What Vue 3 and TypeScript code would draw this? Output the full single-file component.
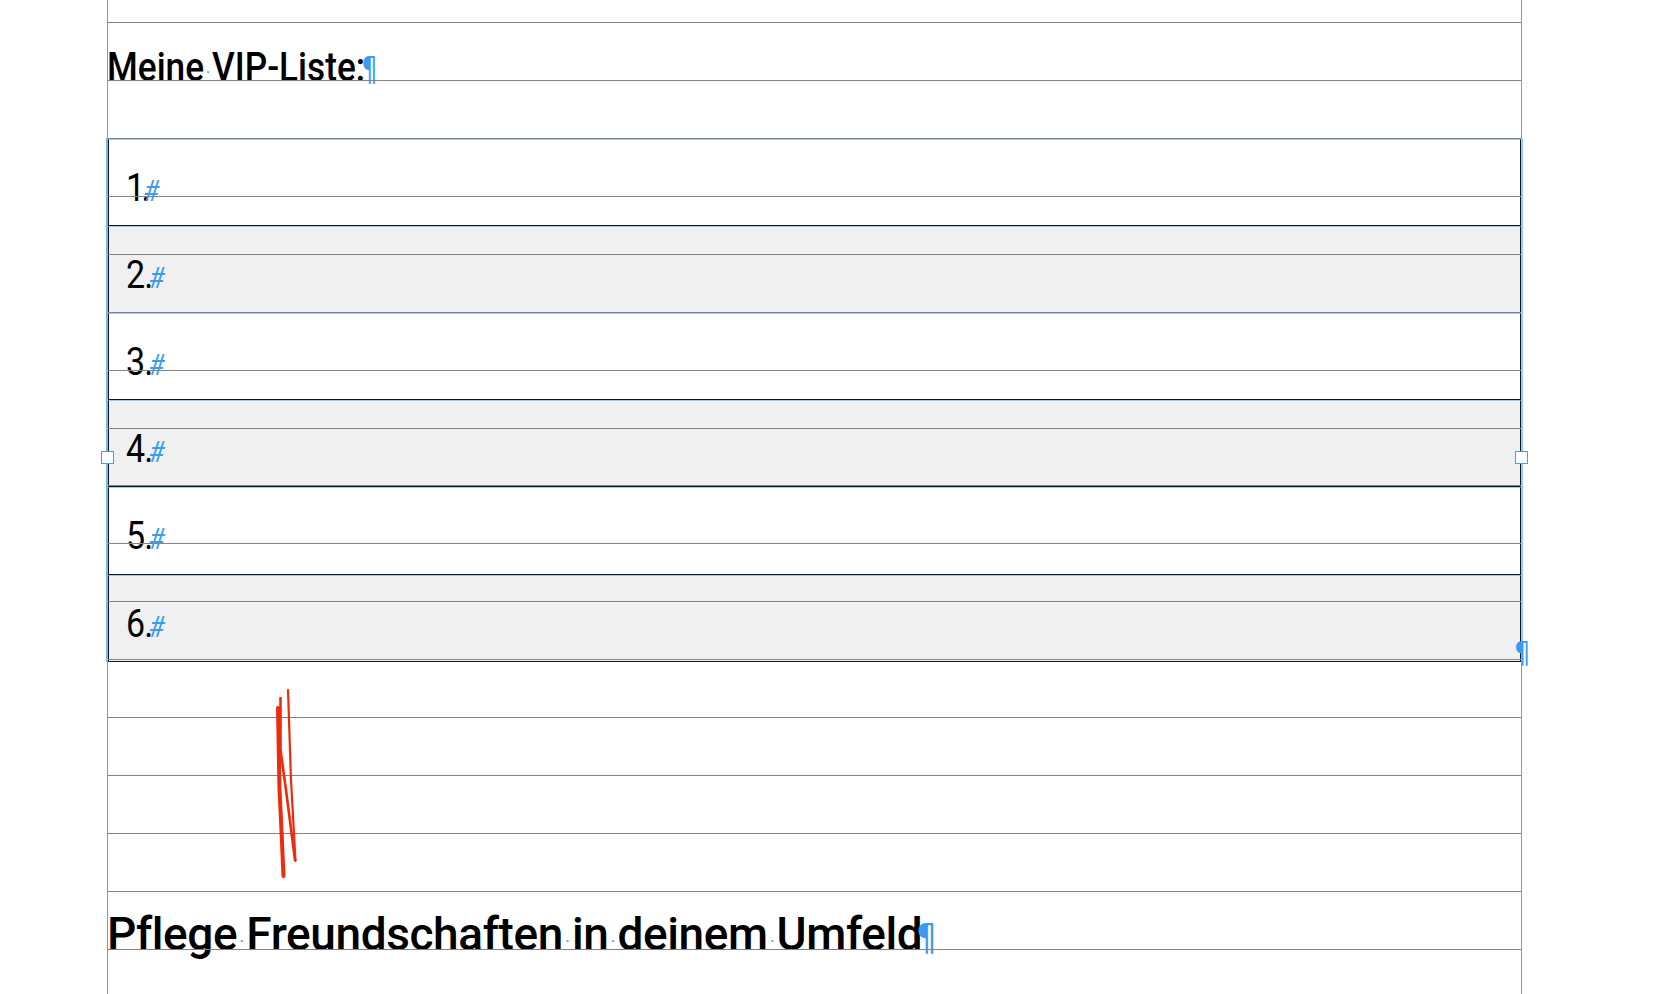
<template>
  <div class="page">
    <div class="sheet">
      <h2 class="vip"><span class="squeeze">Meine<i class="sp">·</i>VIP-Liste:<span class="pil">¶</span></span></h2>

      <div class="tbl">
        <div v-for="n in 6" :key="n" class="row" :class="{ alt: n % 2 === 0 }">
          <span class="squeeze"><span class="num" :class="{ one: n === 1 }">{{ n }}.</span><span class="hash">#</span></span>
        </div>
        <span class="handle left"></span>
        <span class="handle right"></span>
        <span class="pil end">¶</span>
      </div>

      <div class="gap"></div>

      <h1 class="title">Pflege<i class="sp">·</i>Freundschaften<i class="sp">·</i>in<i class="sp">·</i>deinem<i class="sp">·</i>Umfeld<span class="pil">¶</span></h1>

      <!-- baseline grid sits on top of the frames -->
      <svg class="grid" width="1415" height="994" viewBox="0 0 1415 994">
        <rect v-for="y in gridLines" :key="y" x="1" :y="y" width="1413" height="1" fill="#838383" />
      </svg>

      <svg class="scribble" width="60" height="220" viewBox="0 0 60 220" fill="none" stroke="#f02a0c" stroke-linecap="round">
        <path d="M28 38 L29.5 120 L31 150 L33.5 206" stroke-width="4" />
        <path d="M30.5 28 L30.5 80 L36 120 L45 190" stroke-width="2.6" />
        <path d="M38 20 L41 110 L45.5 191" stroke-width="2.2" />
      </svg>
    </div>
  </div>
</template>

<script setup lang="ts">
// lines of the baseline grid, 57.9px apart
const gridLines: number[] = []
for (let i = 0; i < 17; i++) gridLines.push(Math.round(22.2 + i * 57.9))
</script>

<style>
html, body { margin: 0; background: #fff; overflow: hidden; }
</style>

<style scoped>
.page {
  height: 994px;
  padding-left: 107px;
  overflow: hidden;
  font-family: Roboto, "Liberation Sans", sans-serif;
  color: #000;
}
.sheet {
  position: relative;
  width: 1415px;
  height: 994px;
  box-sizing: border-box;
  border-left: 1px solid #62a7d2;
  border-right: 1px solid #62a7d2;
}
.squeeze {
  display: inline-block;
  transform: scaleX(0.87);
  transform-origin: left center;
}
.vip {
  margin: 0 0 0 -1px;
  height: 138px;
  box-sizing: border-box;
  padding-top: 44px;
  font-size: 40px;
  line-height: 48px;
  font-weight: 500;
  white-space: nowrap;
}
.vip .squeeze { transform: scaleX(0.88); }
.sp {
  display: inline-block;
  width: 9px;
  text-align: center;
  font-style: normal;
  font-size: 13px;
  font-weight: 700;
  line-height: 1;
  vertical-align: 5px;
  color: #3a9bf0;
  letter-spacing: 0;
}
.pil {
  display: inline-block;
  font-family: "DejaVu Sans", sans-serif;
  font-weight: 400;
  color: #3a9bf0;
  letter-spacing: 0;
  transform: scaleX(0.85);
  transform-origin: left center;
}
.vip .pil { margin-left: -4px; font-size: 34px; }
.title .pil { margin-left: -6px; font-size: 38px; }
.tbl {
  position: relative;
  border-top: 1px solid #8a9cb5;
  box-shadow: -2px 0 0 #7ab8ea, 2px 0 0 #9ccbf0;
}
.row {
  height: 87px;
  box-sizing: border-box;
  padding: 24px 0 0 17px;
  border: 1px solid #0c1426;
  border-top-color: #a9c6e6;
  background: #fff;
  font-size: 39px;
  line-height: 48px;
  white-space: nowrap;
}
.row:nth-child(5) { height: 88px; }
.row.alt { background: #f0f0f0; }
.row:nth-child(2) { border-bottom-color: #9fb0c6; }
.num { font-weight: 400; letter-spacing: -1px; }
.num.one { letter-spacing: -4px; }
.hash {
  margin-left: -4px;
  font-size: 30px;
  font-style: italic;
  font-weight: 400;
  color: #3a9bf0;
}
.handle {
  position: absolute;
  top: 312px;
  width: 11px;
  height: 11px;
  background: #fff;
  border: 1px solid #4a9fd6;
}
.handle.left { left: -7px; }
.handle.right { right: -7px; }
.end {
  position: absolute;
  right: -12px;
  top: 497px;
  font-size: 30px;
  line-height: 34px;
}
.gap { height: 244px; }
.title {
  margin: 0 0 0 -1px;
  font-size: 46px;
  line-height: 56px;
  font-weight: 500;
  letter-spacing: -0.4px;
  white-space: nowrap;
}
.grid {
  position: absolute;
  left: -1px;
  top: 0;
  pointer-events: none;
}
.scribble {
  position: absolute;
  left: 142px;
  top: 670px;
  pointer-events: none;
}
</style>
